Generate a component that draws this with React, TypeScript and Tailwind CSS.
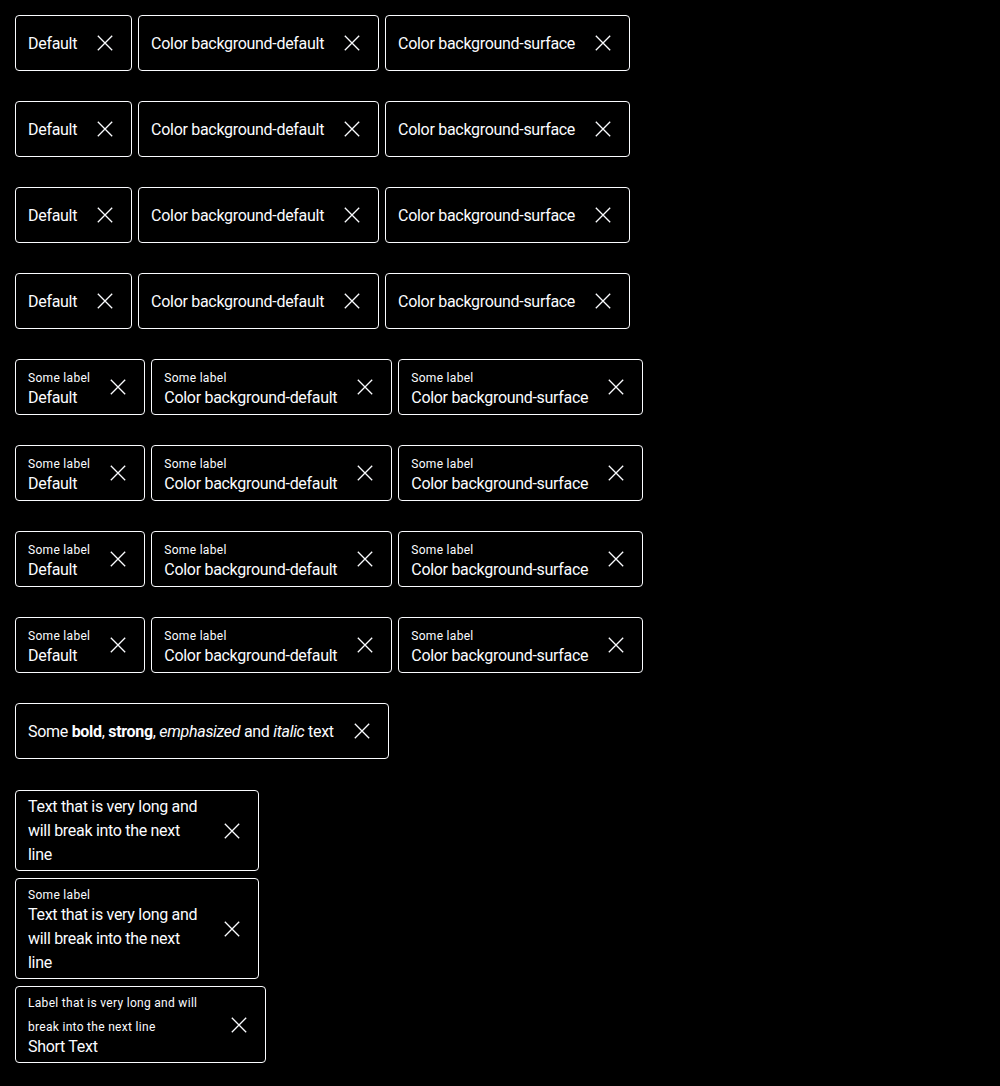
import { ReactNode } from "react";

function CloseIcon() {
  return (
    <svg width="24" height="24" viewBox="0 0 24 24" className="shrink-0" fill="none">
      <path d="M4.8 4.8 19.2 19.2M19.2 4.8 4.8 19.2" stroke="#fbfcff" strokeWidth="1.3" />
    </svg>
  );
}

interface TagProps {
  label?: ReactNode;
  children: ReactNode;
  className?: string;
}

function Tag({ label, children, className = "" }: TagProps) {
  return (
    <div
      className={`flex min-h-[56px] items-center gap-4 rounded-[4px] border border-[#fbfcff] py-[3px] pl-3 pr-[14px] text-[#fbfcff] ${className}`}
    >
      <div className="flex min-w-0 flex-1 flex-col">
        {label && (
          <span className="mb-[-5px] pt-px text-[12px] leading-6 tracking-[0.3px]">{label}</span>
        )}
        <span className="pt-px text-[16px] leading-6 tracking-[-0.3px]">{children}</span>
      </div>
      <CloseIcon />
    </div>
  );
}

const texts = ["Default", "Color background-default", "Color background-surface"];

export default function App() {
  return (
    <div
      className="min-h-[1086px] bg-black p-[15px]"
      style={{ fontFamily: "Roboto, 'Liberation Sans', sans-serif" }}
    >
      <div className="flex flex-col gap-[30px]">
        {[0, 1, 2, 3].map((r) => (
          <div key={r} className="flex items-start gap-[6px]">
            {texts.map((t) => (
              <Tag key={t}>{t}</Tag>
            ))}
          </div>
        ))}
        {[0, 1, 2, 3].map((r) => (
          <div key={"l" + r} className="flex items-start gap-[6px]">
            {texts.map((t) => (
              <Tag key={t} label="Some label">
                {t}
              </Tag>
            ))}
          </div>
        ))}
        <div className="flex">
          <Tag>
            Some <b className="font-bold">bold</b>, <strong className="font-bold">strong</strong>,{" "}
            <em className="italic">emphasized</em> and <i className="italic">italic</i> text
          </Tag>
        </div>
      </div>

      <div className="mt-[31px] flex flex-col gap-[7px]">
        <Tag className="w-[244px]">Text that is very long and will break into the next line</Tag>
        <Tag className="w-[244px]" label="Some label">
          Text that is very long and will break into the next line
        </Tag>
        <Tag className="w-[251px]" label="Label that is very long and will break into the next line">
          Short Text
        </Tag>
      </div>
    </div>
  );
}
